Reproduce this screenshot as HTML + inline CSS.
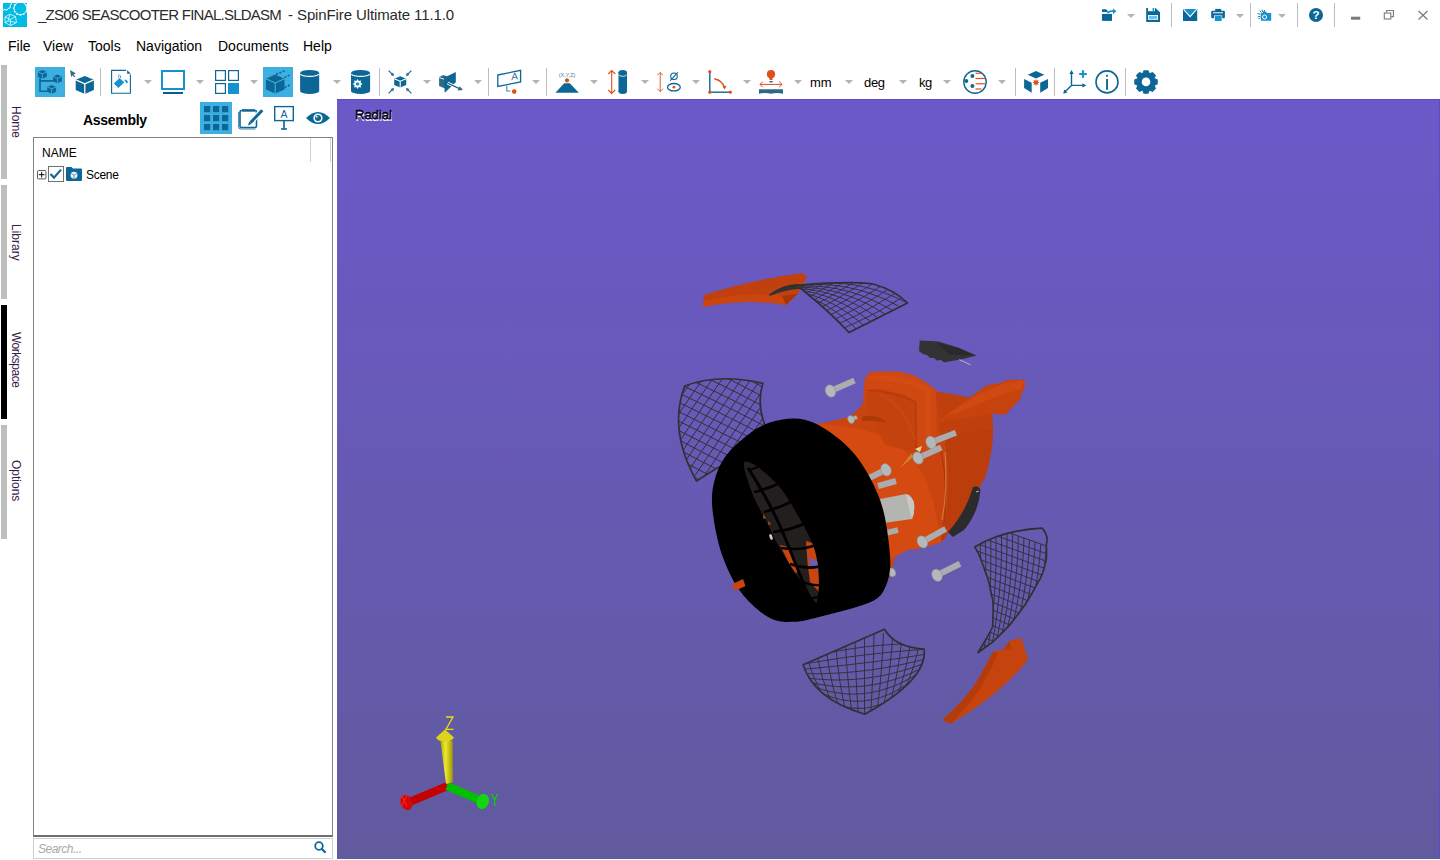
<!DOCTYPE html>
<html><head><meta charset="utf-8">
<style>
*{margin:0;padding:0;box-sizing:border-box}
html,body{width:1440px;height:860px;overflow:hidden;background:#fff;font-family:"Liberation Sans",sans-serif;color:#000}
.abs{position:absolute}
#title{left:38px;top:6px;font-size:15px;color:#2b2b2b;white-space:pre}
.menu{top:38px;font-size:14px;color:#000;white-space:nowrap}
.tab{left:1px;width:6px;height:114px;background:#bebebe}
.tabt{left:11px;width:12px;font-size:12px;color:#3a1a48;writing-mode:vertical-rl;white-space:nowrap}
#vp{left:337px;top:99px;width:1103px;height:760px;background:linear-gradient(#6c59c9,#615a9e);border-top:1px solid #5b4bcb;border-right:1px solid #5b4bcb}
svg{position:absolute;left:0;top:0}
</style></head><body>
<div class="abs" style="left:3px;top:3px;width:24px;height:24px;background:#00bce4"></div>
<div id="title" class="abs"><span style="letter-spacing:-0.76px">_ZS06 SEASCOOTER FINAL.SLDASM</span><span style="letter-spacing:-0.12px;margin-left:3px"> - SpinFire Ultimate 11.1.0</span></div>
<div class="abs menu" style="left:8px">File</div>
<div class="abs menu" style="left:43px">View</div>
<div class="abs menu" style="left:88px">Tools</div>
<div class="abs menu" style="left:136px">Navigation</div>
<div class="abs menu" style="left:218px">Documents</div>
<div class="abs menu" style="left:303px">Help</div>

<div class="abs tab" style="top:65px"></div>
<div class="abs tab" style="top:185px"></div>
<div class="abs tab" style="top:305px;background:#000"></div>
<div class="abs tab" style="top:425px"></div>
<div class="abs tabt" style="top:106px">Home</div>
<div class="abs tabt" style="top:224px">Library</div>
<div class="abs tabt" style="top:332px;letter-spacing:-0.5px">Workspace</div>
<div class="abs tabt" style="top:460px">Options</div>

<div class="abs" style="left:83px;top:112px;font-size:14px;font-weight:bold;letter-spacing:-0.3px">Assembly</div>
<div class="abs" style="left:33px;top:137px;width:300px;height:700px;border:1px solid #828282;border-bottom:2px solid #6e6e6e"></div>
<div class="abs" style="left:310px;top:138px;width:1px;height:24px;background:#d0d0d0"></div>
<div class="abs" style="left:330px;top:138px;width:1px;height:24px;background:#d0d0d0"></div>
<div class="abs" style="left:42px;top:146px;font-size:12px">NAME</div>
<div class="abs" style="left:86px;top:168px;font-size:12px;letter-spacing:-0.3px">Scene</div>
<div class="abs" style="left:33px;top:838px;width:300px;height:21px;border:1px solid #d0d0d0"></div>
<div class="abs" style="left:38px;top:842px;font-size:12px;font-style:italic;color:#a8a8a8;letter-spacing:-0.5px">Search...</div>

<div id="vp" class="abs"></div>
<div class="abs" style="left:355px;top:107px;font-size:13px;color:#000;text-shadow:0.5px 1.6px 0 #fff;-webkit-text-stroke:0.3px #000">Radial</div>

<div class="abs" style="left:810px;top:75px;font-size:13px">mm</div>
<div class="abs" style="left:864px;top:75px;font-size:13px;letter-spacing:-0.3px">deg</div>
<div class="abs" style="left:919px;top:75px;font-size:13px;letter-spacing:-0.5px">kg</div>

<svg width="1440" height="860" viewBox="0 0 1440 860">
<rect x="1102" y="13.9" width="10" height="7" fill="#0d6796"/>
<polygon points="1102,9.2 1106,9.2 1107.5,10.5 1107.5,12 1102,12" fill="#0d6796"/>
<path d="M1107.4,13 Q1109,10.8 1113.5,10.8" fill="none" stroke="#1592cf" stroke-width="1.8"/>
<polygon points="1113,8.6 1116.3,11.3 1113,14.2" fill="#1592cf"/>
<polygon points="1127,13.9 1135,13.9 1131,17.9" fill="#b4b4b4"/>
<polygon points="1146.2,8 1155.4,8 1160,12.3 1160,22 1146.2,22" fill="#0d6796"/>
<rect x="1148" y="8" width="7" height="3.2" fill="#fff"/>
<rect x="1152.6" y="8" width="1.6" height="3" fill="#1592cf"/>
<rect x="1148" y="15" width="10" height="4.8" fill="#fff"/>
<rect x="1148.8" y="15.8" width="8.4" height="3.2" fill="#6cc1e8"/>
<rect x="1171" y="3" width="1" height="24" fill="#bdbdbd"/>
<rect x="1183" y="9" width="14.2" height="12" fill="#0d6796"/>
<polygon points="1183,9 1197.2,9 1190.1,16.5" fill="#1592cf"/>
<polyline points="1183.6,9.4 1190.1,16.6 1196.6,9.4" fill="none" stroke="#fff" stroke-width="1.1"/>
<rect x="1215.2" y="8.9" width="6" height="3" fill="#0d6796"/>
<rect x="1211.2" y="10.7" width="13.7" height="7.6" rx="1" fill="#0d6796"/>
<rect x="1213" y="12.3" width="10" height="1" fill="#fff"/>
<rect x="1214" y="15.4" width="8.2" height="5.8" fill="#fff"/>
<rect x="1214.8" y="15.9" width="6.8" height="5.1" fill="#1592cf"/>
<polygon points="1236,13.9 1244,13.9 1240,17.9" fill="#b4b4b4"/>
<rect x="1250" y="3" width="1" height="24" fill="#bdbdbd"/>
<rect x="1261" y="13" width="10.2" height="7.8" rx="0.6" fill="#1592cf"/>
<rect x="1263" y="11.6" width="3.5" height="2" fill="#1592cf"/>
<circle cx="1264.6" cy="17" r="2" fill="none" stroke="#fff" stroke-width="1"/>
<line x1="1262" y1="9.6" x2="1262.6" y2="12.2" stroke="#0d6796" stroke-width="0.9"/>
<line x1="1259.5" y1="10.8" x2="1261.5" y2="12.6" stroke="#0d6796" stroke-width="0.9"/>
<line x1="1257.5" y1="13.6" x2="1260.6" y2="14.2" stroke="#0d6796" stroke-width="0.9"/>
<line x1="1257.8" y1="16.8" x2="1260.6" y2="16.2" stroke="#0d6796" stroke-width="0.9"/>
<line x1="1258.6" y1="18.8" x2="1260.6" y2="17.8" stroke="#0d6796" stroke-width="0.9"/>
<line x1="1264.5" y1="10" x2="1264" y2="12.2" stroke="#0d6796" stroke-width="0.9"/>
<polygon points="1278,13.9 1286,13.9 1282,17.9" fill="#b4b4b4"/>
<rect x="1297" y="3" width="1" height="24" fill="#bdbdbd"/>
<circle cx="1316" cy="15" r="7" fill="#0d6796"/>
<text x="1316" y="19.3" font-family="Liberation Sans" font-weight="bold" font-size="11.5" fill="#fff" text-anchor="middle">?</text>
<rect x="1334" y="3" width="1" height="24" fill="#bdbdbd"/>
<rect x="1351" y="16.7" width="9.2" height="3" fill="#7a7a7a"/>
<rect x="1384.3" y="13" width="6.5" height="6" fill="none" stroke="#7a7a7a" stroke-width="1.1"/>
<polyline points="1386.6,12.4 1386.6,10.5 1393.4,10.5 1393.4,16.6 1391.2,16.6" fill="none" stroke="#7a7a7a" stroke-width="1.1"/>
<path d="M1418.5,11 L1427.5,19.5 M1427.5,11 L1418.5,19.5" stroke="#7a7a7a" stroke-width="1.2"/>
<rect x="35" y="67" width="30" height="30" fill="#3eafe1"/>
<path d="M40,78 V91.2 H47.5 M40,80.9 H53.5" fill="none" stroke="#0d6796" stroke-width="1.6"/>
<polygon points="42.35,70.1 46.8,71.99 46.8,76.81 42.35,78.7 37.9,76.81 37.9,71.99" fill="#0d6796"/>
<polyline points="37.9,71.99 42.35,73.88 46.8,71.99" fill="none" stroke="#3eafe1" stroke-width="0.9"/>
<line x1="42.35" y1="73.88" x2="42.35" y2="78.7" stroke="#3eafe1" stroke-width="0.9"/>
<polygon points="57.45,74.6 61.9,76.49 61.9,81.31 57.45,83.2 53,81.31 53,76.49" fill="#0d6796"/>
<polyline points="53,76.49 57.45,78.38 61.9,76.49" fill="none" stroke="#3eafe1" stroke-width="0.9"/>
<line x1="57.45" y1="78.38" x2="57.45" y2="83.2" stroke="#3eafe1" stroke-width="0.9"/>
<polygon points="51.65,85 56.1,86.91 56.1,91.79 51.65,93.7 47.2,91.79 47.2,86.91" fill="#0d6796"/>
<polyline points="47.2,86.91 51.65,88.83 56.1,86.91" fill="none" stroke="#3eafe1" stroke-width="0.9"/>
<line x1="51.65" y1="88.83" x2="51.65" y2="93.7" stroke="#3eafe1" stroke-width="0.9"/>
<polygon points="70.1,70.1 75.9,73.6 73.4,74.4 75.3,76.6 74.4,77.3 72.6,75.2 71.2,77" fill="#2c6a86"/>
<polygon points="84.8,75.9 93.9,79.86 93.9,89.94 84.8,93.9 75.7,89.94 75.7,79.86" fill="#0d6796"/>
<polyline points="75.7,79.86 84.8,83.82 93.9,79.86" fill="none" stroke="#fff" stroke-width="1.3"/>
<line x1="84.8" y1="83.82" x2="84.8" y2="93.9" stroke="#fff" stroke-width="1.3"/>
<rect x="100" y="68" width="1" height="28" fill="#bdbdbd"/>
<path d="M126,70.4 H111.6 V93.2 H130.4 V74.6" fill="none" stroke="#0d6796" stroke-width="1.1"/>
<polygon points="127.1,70.1 130.8,73.8 127.1,73.8" fill="#0d6796"/>
<polygon points="113.9,83.5 119.5,77.9 124.3,82.3 118.4,87.9" fill="#1592cf"/>
<path d="M118.6,77.8 Q118.3,74.8 119.6,74.9 Q120.8,75 120.6,78" fill="none" stroke="#1592cf" stroke-width="0.8"/>
<path d="M124.6,79.4 Q127.8,79.6 127.9,82.6 L126.3,83.8 Q126.6,81.4 124.8,81.2 Z" fill="#1592cf"/>
<polygon points="144,80 152,80 148,84" fill="#b4b4b4"/>
<rect x="162" y="71" width="22" height="18" fill="none" stroke="#1592cf" stroke-width="2"/>
<rect x="163" y="92" width="20" height="2" fill="#0b5e8a"/>
<polygon points="196,80 204,80 200,84" fill="#b4b4b4"/>
<rect x="215.6" y="70.6" width="9.8" height="9.8" fill="none" stroke="#0d6796" stroke-width="1.2"/>
<rect x="228.6" y="70.6" width="9.8" height="9.8" fill="none" stroke="#0d6796" stroke-width="1.2"/>
<rect x="215.6" y="83.6" width="9.8" height="9.8" fill="none" stroke="#0d6796" stroke-width="1.2"/>
<rect x="228" y="83" width="11" height="11" fill="#1592cf"/>
<polygon points="250,80 258,80 254,84" fill="#b4b4b4"/>
<rect x="263" y="67" width="30" height="30" fill="#3eafe1"/>
<polygon points="275.2,74.6 284.5,78.78 284.5,89.42 275.2,93.6 265.9,89.42 265.9,78.78" fill="#0d6796"/>
<polyline points="265.9,78.78 275.2,82.96 284.5,78.78" fill="none" stroke="#3eafe1" stroke-width="1.1"/>
<line x1="275.2" y1="82.96" x2="275.2" y2="93.6" stroke="#3eafe1" stroke-width="1.1"/>
<path d="M276,74.4 L285.5,70.5 M284.3,77.6 L289.4,75.2 M284.5,87.6 L289.7,85" fill="none" stroke="#0d6796" stroke-width="1.5" stroke-dasharray="2.2,1.4"/>
<path d="M300.1,72.9 V91 A9.55,3 0 0 0 319.2,91 V72.9 Z" fill="#0d6796"/>
<ellipse cx="309.65" cy="72.9" rx="9.55" ry="3" fill="#0d6796"/>
<path d="M300.4,74.1 A9.55,3 0 0 0 318.9,74.1" fill="none" stroke="#fff" stroke-width="1.3"/>
<polygon points="333,80 341,80 337,84" fill="#b4b4b4"/>
<path d="M351,72.9 V91 A9.55,3 0 0 0 370.1,91 V72.9 Z" fill="#0d6796"/>
<ellipse cx="360.55" cy="72.9" rx="9.55" ry="3" fill="#0d6796"/>
<path d="M351.3,74.1 A9.55,3 0 0 0 369.8,74.1" fill="none" stroke="#fff" stroke-width="1.3"/>
<polygon points="362.6,84 360.56,85.22 361.14,87.54 358.82,86.96 357.6,89 356.38,86.96 354.06,87.54 354.64,85.22 352.6,84 354.64,82.78 354.06,80.46 356.38,81.04 357.6,79 358.82,81.04 361.14,80.46 360.56,82.78" fill="#fff"/>
<circle cx="357.6" cy="84" r="1.8" fill="#1592cf"/>
<rect x="379" y="68" width="1" height="28" fill="#bdbdbd"/>
<polygon points="400.2,76.2 406.2,78.71 406.2,85.09 400.2,87.6 394.2,85.09 394.2,78.71" fill="#0d6796"/>
<polyline points="394.2,78.71 400.2,81.22 406.2,78.71" fill="none" stroke="#fff" stroke-width="1.1"/>
<line x1="400.2" y1="81.22" x2="400.2" y2="87.6" stroke="#fff" stroke-width="1.1"/>
<line x1="388.6" y1="70.6" x2="393.4" y2="75.4" stroke="#2c6a86" stroke-width="1.3"/>
<polygon points="393.97,75.97 390.57,75.12 393.12,72.57" fill="#2c6a86"/>
<line x1="411.4" y1="70.6" x2="406.6" y2="75.4" stroke="#2c6a86" stroke-width="1.3"/>
<polygon points="406.03,75.97 406.88,72.57 409.43,75.12" fill="#2c6a86"/>
<line x1="388.6" y1="93.4" x2="393.4" y2="88.6" stroke="#2c6a86" stroke-width="1.3"/>
<polygon points="393.97,88.03 393.12,91.43 390.57,88.88" fill="#2c6a86"/>
<line x1="411.4" y1="93.4" x2="406.6" y2="88.6" stroke="#2c6a86" stroke-width="1.3"/>
<polygon points="406.03,88.03 409.43,88.88 406.88,91.43" fill="#2c6a86"/>
<polygon points="423,80 431,80 427,84" fill="#b4b4b4"/>
<polygon points="439.1,77 443.5,75 449,77.2 449,88.2 444.5,88.2 439.1,86" fill="#2c6a86"/>
<polyline points="439.4,77.6 444.5,79.4" stroke="#fff" stroke-width="0.9"/>
<polygon points="444.1,77.7 455.8,72.1 455.8,82.3 444.7,92.8" fill="#0d6796"/>
<line x1="447.6" y1="83.2" x2="460.6" y2="89" stroke="#fff" stroke-width="3"/>
<line x1="447.6" y1="83.2" x2="460" y2="88.8" stroke="#2c6a86" stroke-width="1.4"/>
<polygon points="463,90 457.6,90.6 459.6,86.2" fill="#2c6a86"/>
<polygon points="474,80 482,80 478,84" fill="#b4b4b4"/>
<rect x="488" y="68" width="1" height="28" fill="#bdbdbd"/>
<polygon points="497.8,75 520.6,70.4 520.6,82 497.8,86.4" fill="none" stroke="#0d6796" stroke-width="1.3"/>
<text x="511.2" y="80.6" font-family="Liberation Sans" font-size="10" fill="#2c6a86" transform="skewY(-8) translate(0,71.5)" >A</text>
<path d="M506.8,86 V91 H510.3" fill="none" stroke="#3a8ab0" stroke-width="1.1"/>
<circle cx="514.2" cy="91.6" r="2.3" fill="#e04e1b"/>
<polygon points="532,80 540,80 536,84" fill="#b4b4b4"/>
<rect x="546" y="68" width="1" height="28" fill="#bdbdbd"/>
<text x="567" y="76.8" font-family="Liberation Sans" font-size="5.5" fill="#4a7f99" text-anchor="middle">(X,Y,Z)</text>
<polygon points="555.4,92.8 564.2,83.2 569.8,83.2 578.8,92.8" fill="#0d6796"/>
<circle cx="567" cy="80.4" r="2.1" fill="#e04e1b"/>
<polygon points="590,80 598,80 594,84" fill="#b4b4b4"/>
<line x1="611.7" y1="70.5" x2="611.7" y2="93.5" stroke="#e04e1b" stroke-width="1.1"/>
<polyline points="608.2,74 611.7,70.5 615.2,74" fill="none" stroke="#e04e1b" stroke-width="1.1"/>
<polyline points="608.2,90 611.7,93.5 615.2,90" fill="none" stroke="#e04e1b" stroke-width="1.1"/>
<rect x="618.5" y="72" width="8.5" height="20" fill="#0d6796"/>
<ellipse cx="622.75" cy="72.6" rx="4.25" ry="2.6" fill="#0d6796"/>
<ellipse cx="622.75" cy="91.6" rx="4.25" ry="2.4" fill="#0d6796"/>
<path d="M618.7,74.5 A4.1,2.2 0 0 0 626.8,74.5" fill="none" stroke="#fff" stroke-width="0.8"/>
<polygon points="641,80 649,80 645,84" fill="#b4b4b4"/>
<line x1="660.2" y1="72.5" x2="660.2" y2="91.5" stroke="#e04e1b" stroke-width="0.9"/>
<polyline points="657.4,75.3 660.2,72.5 663,75.3" fill="none" stroke="#e04e1b" stroke-width="0.9"/>
<polyline points="657.4,88.7 660.2,91.5 663,88.7" fill="none" stroke="#e04e1b" stroke-width="0.9"/>
<circle cx="674" cy="76.3" r="3.3" fill="none" stroke="#0d6796" stroke-width="1.1"/>
<line x1="670.2" y1="80.6" x2="677.8" y2="72.4" stroke="#0d6796" stroke-width="1.1"/>
<ellipse cx="673.9" cy="87.2" rx="6.4" ry="3.7" fill="none" stroke="#0d6796" stroke-width="1.3"/>
<circle cx="673.9" cy="87.2" r="1.4" fill="#e04e1b"/>
<polygon points="692,80 700,80 696,84" fill="#b4b4b4"/>
<line x1="709.8" y1="71.8" x2="709.8" y2="92.3" stroke="#0d6796" stroke-width="1.4"/>
<line x1="709.8" y1="92.2" x2="730.5" y2="92.2" stroke="#0d6796" stroke-width="1.4"/>
<circle cx="709.8" cy="71.7" r="1.6" fill="#e04e1b"/>
<circle cx="709.8" cy="92.2" r="1.6" fill="#e04e1b"/>
<circle cx="730.3" cy="92.2" r="1.6" fill="#e04e1b"/>
<path d="M714.3,78.8 Q722.8,80.6 724.5,88" fill="none" stroke="#e04e1b" stroke-width="1.5"/>
<polygon points="722.4,85.8 726.4,86 724.6,89.4" fill="#e04e1b"/>
<polygon points="743,80 751,80 747,84" fill="#b4b4b4"/>
<circle cx="771" cy="74.2" r="4.1" fill="#e04e1b"/>
<rect x="769.5" y="77" width="3" height="3" fill="#e04e1b"/>
<rect x="769.3" y="81" width="3.4" height="1.4" fill="#2c6f8f"/>
<line x1="760" y1="84.4" x2="782" y2="84.4" stroke="#e04e1b" stroke-width="1"/>
<polyline points="762.8,81.6 760,84.4 762.8,87.2" fill="none" stroke="#e04e1b" stroke-width="1"/>
<polyline points="779.2,81.6 782,84.4 779.2,87.2" fill="none" stroke="#e04e1b" stroke-width="1"/>
<path d="M759,89.2 H783 V93.8 Q777,92.3 771,93.8 Q765,92.3 759,93.8 Z" fill="#2e6a86"/>
<polygon points="794,80 802,80 798,84" fill="#b4b4b4"/>
<polygon points="845,80 853,80 849,84" fill="#b4b4b4"/>
<polygon points="899,80 907,80 903,84" fill="#b4b4b4"/>
<polygon points="943,80 951,80 947,84" fill="#b4b4b4"/>
<circle cx="975" cy="82" r="11.2" fill="none" stroke="#0d6796" stroke-width="1.4"/>
<circle cx="972.4" cy="76" r="2" fill="#0d6796"/>
<circle cx="966.3" cy="81" r="2" fill="#0d6796"/>
<circle cx="972.4" cy="86.1" r="2" fill="#0d6796"/>
<line x1="975.5" y1="73.3" x2="981.5" y2="73.3" stroke="#e04e1b" stroke-width="1.2"/>
<line x1="975.5" y1="78.5" x2="985.2" y2="78.5" stroke="#e04e1b" stroke-width="1.2"/>
<line x1="975.5" y1="83.8" x2="985.2" y2="83.8" stroke="#e04e1b" stroke-width="1.2"/>
<line x1="975.5" y1="89" x2="981.5" y2="89" stroke="#e04e1b" stroke-width="1.2"/>
<polygon points="998,80 1006,80 1002,84" fill="#b4b4b4"/>
<rect x="1015" y="68" width="1" height="28" fill="#bdbdbd"/>
<polygon points="1036,70.9 1044.3,74.8 1036,78.6 1027.8,74.8" fill="#0d6796"/>
<polygon points="1024.1,79.1 1031.7,82.8 1031.7,92.7 1024.1,88.1" fill="#0d6796"/>
<polygon points="1048,79.1 1040.2,82.8 1040.2,92.7 1048,88.1" fill="#0d6796"/>
<polygon points="1039.6,82.5 1037.76,83.23 1038.55,85.05 1036.73,84.26 1036,86.1 1035.27,84.26 1033.45,85.05 1034.24,83.23 1032.4,82.5 1034.24,81.77 1033.45,79.95 1035.27,80.74 1036,78.9 1036.73,80.74 1038.55,79.95 1037.76,81.77" fill="#e04e1b"/>
<rect x="1054" y="68" width="1" height="28" fill="#bdbdbd"/>
<path d="M1071.5,72.5 V85.4 H1084 M1071.5,85.4 L1065,91.8" fill="none" stroke="#0d6796" stroke-width="1.4"/>
<polygon points="1071.5,70 1069.3,74 1073.7,74" fill="#0d6796"/>
<polygon points="1086.3,85.4 1082.4,83.2 1082.4,87.6" fill="#0d6796"/>
<polygon points="1063.2,93.8 1064.2,89.4 1067.4,92.6" fill="#0d6796"/>
<path d="M1083,70.2 V77.8 M1079.2,74 H1086.8" stroke="#1592cf" stroke-width="2.2"/>
<circle cx="1107" cy="81.9" r="11" fill="none" stroke="#0d6796" stroke-width="1.6"/>
<circle cx="1107" cy="75.8" r="1.1" fill="#0d6796"/>
<rect x="1106.1" y="79" width="1.9" height="10.8" fill="#0d6796"/>
<rect x="1125" y="68" width="1" height="28" fill="#bdbdbd"/>
<polygon points="1154.4,78.15 1157.76,79.52 1157.76,84.28 1154.4,85.65 1154.59,85.19 1156,88.53 1152.63,91.9 1149.29,90.49 1149.75,90.3 1148.38,93.66 1143.62,93.66 1142.25,90.3 1142.71,90.49 1139.37,91.9 1136,88.53 1137.41,85.19 1137.6,85.65 1134.24,84.28 1134.24,79.52 1137.6,78.15 1137.41,78.61 1136,75.27 1139.37,71.9 1142.71,73.31 1142.25,73.5 1143.62,70.14 1148.38,70.14 1149.75,73.5 1149.29,73.31 1152.63,71.9 1156,75.27 1154.59,78.61" fill="#0d6796"/>
<circle cx="1146" cy="81.9" r="4.3" fill="#fff"/>
<g>
<!-- assembly header icons -->
<rect x="200" y="102" width="32" height="32" fill="#3eafe1"/>
<g fill="#0d6796">
<rect x="204" y="106" width="6.2" height="6.2"/><rect x="213" y="106" width="6.2" height="6.2"/><rect x="222" y="106" width="6.2" height="6.2"/>
<rect x="204" y="115" width="6.2" height="6.2"/><rect x="213" y="115" width="6.2" height="6.2"/><rect x="222" y="115" width="6.2" height="6.2"/>
<rect x="204" y="124" width="6.2" height="6.2"/><rect x="213" y="124" width="6.2" height="6.2"/><rect x="222" y="124" width="6.2" height="6.2"/>
</g>
<path d="M241.5,110.5 H255 Q256.5,110.5 256.5,112 V126 Q256.5,127.5 255,127.5 H241.5 Q240,127.5 240,126 V112 Q240,110.5 241.5,110.5 Z" fill="none" stroke="#0d6796" stroke-width="1.6"/>
<path d="M238.6,112 V126.5 Q238.6,129 241,129 H255.5" fill="none" stroke="#0d6796" stroke-width="1.1" opacity="0.75"/>
<path d="M242,110.4 H255" stroke="#0d6796" stroke-width="2.4"/>
<path d="M262.3,110.2 L250.3,122.8" stroke="#fff" stroke-width="5.4"/>
<path d="M262.3,110.2 L250.6,122.5" stroke="#0d6796" stroke-width="3"/>
<polygon points="249.2,121.4 251.8,123.8 248,125.6" fill="#0d6796"/>
<rect x="274.7" y="106.6" width="18.6" height="14" fill="none" stroke="#0d6796" stroke-width="1.4"/>
<text x="284" y="117.6" font-family="Liberation Sans" font-size="10.5" fill="#0d6796" text-anchor="middle">A</text>
<rect x="283.2" y="121" width="1.6" height="8" fill="#0d6796"/>
<rect x="281" y="128.2" width="6" height="1.6" fill="#0d6796"/>
<path d="M306,118 Q318,106 330,118 Q318,130 306,118 Z" fill="#0d6796"/>
<circle cx="318" cy="118" r="4.6" fill="#fff"/>
<circle cx="318" cy="118" r="3" fill="#0d6796"/>
<circle cx="316.8" cy="116.8" r="0.9" fill="#fff"/>
<!-- tree row icons -->
<rect x="37.5" y="170.5" width="8.4" height="8.4" rx="1" fill="#fff" stroke="#555" stroke-width="1"/>
<path d="M38.9,174.7 H44.5 M41.7,171.9 V177.5" stroke="#000" stroke-width="1"/>
<rect x="48.5" y="166.5" width="15" height="15" fill="#fff" stroke="#707070" stroke-width="1"/>
<path d="M50.5,174 L54,177.6 L61,169.6" fill="none" stroke="#0d6796" stroke-width="2.2"/>
<path d="M66,168 Q66,167 67,167 H71.5 L73,168.5 H81 Q82,168.5 82,169.5 V180 Q82,181 81,181 H67 Q66,181 66,180 Z" fill="#0d6796"/>
<circle cx="74" cy="175.2" r="3.4" fill="#e6f0f5"/>
<path d="M74,175.2 V178.4 M74,175.2 L71.4,173.6 M74,175.2 L76.6,173.6" stroke="#0d6796" stroke-width="0.6"/>
<!-- search icon -->
<circle cx="319" cy="846" r="3.8" fill="none" stroke="#0d6796" stroke-width="1.8"/>
<line x1="321.6" y1="848.8" x2="325.5" y2="852.6" stroke="#0d6796" stroke-width="2.2"/>
<!-- app icon detail -->
<clipPath id="appc"><rect x="3" y="3" width="24" height="24"/></clipPath>
<g clip-path="url(#appc)">
<polygon points="28.0,8.3 26.6,10.0 27.0,12.1 24.9,12.8 24.2,14.9 22.1,14.5 20.4,15.9 18.7,14.5 16.6,14.9 15.9,12.8 13.8,12.1 14.2,10.0 12.8,8.3 14.2,6.6 13.8,4.5 15.9,3.8 16.6,1.7 18.7,2.1 20.4,0.7 22.1,2.1 24.2,1.7 24.9,3.8 27.0,4.5 26.6,6.6" fill="#fff"/>
<circle cx="20.4" cy="8.3" r="5.9" fill="#00bce4"/>
<polygon points="11.6,4.0 10.1,5.7 10.3,7.9 8.2,8.4 7.0,10.3 5.0,9.4 3.0,10.3 1.8,8.4 -0.3,7.9 -0.1,5.7 -1.6,4.0 -0.1,2.3 -0.3,0.1 1.8,-0.4 3.0,-2.3 5.0,-1.4 7.0,-2.3 8.2,-0.4 10.3,0.1 10.1,2.3" fill="none" stroke="#fff" stroke-width="1"/>
<path d="M5,17 L10,14.2 L15.5,16.5 L16.5,22.5 L10.5,25.5 L5,22.5 Z M5,17 L10.5,19.5 L15.5,16.5 M10.5,19.5 L10.5,25.5 M10,14.2 L8,21 L16.5,22.5 M5,22.5 L8,21" fill="none" stroke="#fff" stroke-width="0.8" opacity="0.9"/>
</g>
</g>
<defs><clipPath id="mc1"><path d="M770,295 Q785,284 800,285 Q850,281 873,284 Q895,290 907.5,303 L849,332.5 Q828,310 800,288 Q785,289 770,295 Z"/></clipPath><clipPath id="mc2"><path d="M684.7,386 Q719,373 762.9,383.3 Q756,405 766.4,428.7 L745,455 L717.5,467.8 L696.5,481 Q668,430 684.7,386 Z"/></clipPath><clipPath id="mc3"><path d="M974.7,546.9 Q1003,530 1042.2,528.1 Q1049,536 1046.3,544.4 Q1047,560 1045.5,562.3 Q1043,575 1038.2,581.9 Q1032,594 1025.1,604.7 Q1017,616 1008.9,625.9 Q1000,635 992.6,642.1 L977.9,652.7 Q993,628 992.6,625.9 Q994,600 991.8,596.5 Q989,580 986,573.7 Q980,555 974.7,546.9 Z"/></clipPath><clipPath id="mc4"><path d="M803.1,664.8 L884.5,629.3 Q895,647.4 924.1,649.1 Q928,679.4 864.8,714.2 Q814,699.3 803.1,664.8 Z"/></clipPath><clipPath id="gclip"><path d="M744,463 C742.8,466.7 748.2,481.8 751,490 C753.8,498.2 757.8,505.2 761,512 C764.2,518.8 767.2,525.5 770,531 C772.8,536.5 774.7,539.3 778,545 C781.3,550.7 785.8,558.5 790,565 C794.2,571.5 798.9,578 803,584 C807.1,590 812.1,598.2 814.4,601 C816.7,603.8 816.2,604.3 817,601 C817.8,597.7 819,588.7 818.9,581.2 C818.8,573.7 817.9,563.5 816.2,556 C814.6,548.5 812.3,543.2 809,536 C805.7,528.8 801.1,520.8 796.3,512.7 C791.5,504.6 786.3,495 780,487.5 C773.7,480 764.4,471.7 758.4,467.6 C752.4,463.5 745.2,459.3 744,463 Z"/></clipPath></defs>
<path d="M703,307 L704,295 Q750,280 803,273 L807,277 L800,290 L797,295 L786,305 Q745,298 703,307 Z" fill="#c0400e"/>
<path d="M704,301 Q745,291 786,296 L786,305 Q745,298 703,307 Z" fill="#d44a11" opacity="0.55"/>
<path d="M782,296 L797,294 L786,305 Z" fill="#a83508"/>
<g clip-path="url(#mc1)"><path d="M772.3,291.8 L782.8,288.7 L793.1,286.3 L803.4,284.5 L813.7,283.3 L823.9,282.8 L834.1,282.9 L844.3,283.6 L854.4,285 L864.4,287 L874.4,289.6 L884.4,292.9 L894.3,296.8 L904.2,301.3 L914.1,306.5 L923.8,312.3 L933.6,318.8 M770.9,291.2 L781,288.7 L790.9,286.7 L800.9,285.4 L810.8,284.7 L820.6,284.5 L830.4,285 L840.1,286.1 L849.8,287.8 L859.4,290.1 L869,293.1 L878.5,296.6 L888,300.7 L897.4,305.5 L906.8,310.8 L916.1,316.8 L925.4,323.3 M769.7,290.8 L779.4,288.7 L788.9,287.2 L798.5,286.3 L808,286 L817.4,286.3 L826.7,287.2 L836,288.6 L845.3,290.6 L854.4,293.2 L863.6,296.4 L872.6,300.2 L881.6,304.5 L890.6,309.4 L899.4,315 L908.3,321.1 L917,327.7 M768.7,290.4 L778,288.8 L787.1,287.8 L796.2,287.3 L805.3,287.4 L814.2,288 L823.1,289.2 L832,291 L840.7,293.3 L849.4,296.2 L858.1,299.6 L866.7,303.6 L875.2,308.2 L883.6,313.3 L892,319 L900.3,325.2 L908.5,332 M768,290 L776.8,288.9 L785.5,288.3 L794.1,288.3 L802.7,288.8 L811.2,289.8 L819.6,291.3 L828,293.4 L836.2,296 L844.5,299.1 L852.6,302.8 L860.6,307 L868.6,311.7 L876.5,317 L884.3,322.8 L892.1,329.1 L899.8,336 M767.4,289.8 L775.7,289.1 L784,289 L792.2,289.3 L800.3,290.2 L808.3,291.5 L816.2,293.4 L824,295.7 L831.8,298.6 L839.5,302 L847,305.9 L854.6,310.3 L862,315.2 L869.3,320.6 L876.6,326.5 L883.8,332.9 L890.9,339.8 M767.1,289.6 L774.9,289.4 L782.7,289.6 L790.4,290.4 L797.9,291.6 L805.4,293.2 L812.8,295.4 L820.1,298 L827.3,301.2 L834.5,304.8 L841.5,308.9 L848.4,313.4 L855.3,318.5 L862,324 L868.7,330 L875.3,336.5 L881.8,343.5 M767,289.5 L774.3,289.7 L781.6,290.3 L788.7,291.4 L795.7,293 L802.7,295 L809.5,297.4 L816.3,300.3 L822.9,303.7 L829.5,307.5 L835.9,311.8 L842.3,316.5 L848.5,321.7 L854.7,327.3 L860.7,333.4 L866.7,340 L872.5,347 M767.1,289.5 L773.9,290.1 L780.6,291.1 L787.2,292.5 L793.7,294.4 L800,296.7 L806.3,299.4 L812.4,302.5 L818.5,306.1 L824.4,310.1 L830.3,314.6 L836,319.5 L841.7,324.8 L847.2,330.5 L852.6,336.7 L857.9,343.3 L863.1,350.3 M805.3,283.6 L803.2,284.1 L801.3,284.6 L799.4,285.2 L797.6,285.8 L795.9,286.4 L794.2,287 L792.7,287.6 L791.2,288.2 L789.9,288.9 L788.6,289.6 L787.4,290.3 L786.3,291 L785.3,291.8 L784.4,292.5 L783.6,293.3 L782.8,294.1 M814.3,281.6 L812.1,282.4 L809.9,283.3 L807.7,284.1 L805.7,285 L803.7,285.8 L801.9,286.7 L800,287.6 L798.3,288.5 L796.7,289.4 L795.1,290.3 L793.6,291.2 L792.1,292.1 L790.8,293.1 L789.5,294 L788.3,295 L787.2,295.9 M823.3,280.1 L820.8,281.2 L818.4,282.3 L816.1,283.5 L813.8,284.6 L811.6,285.7 L809.4,286.8 L807.3,287.9 L805.3,289 L803.4,290.1 L801.5,291.3 L799.6,292.4 L797.9,293.5 L796.2,294.7 L794.5,295.8 L793,296.9 L791.5,298.1 M832.3,279.1 L829.6,280.5 L827,281.9 L824.4,283.2 L821.9,284.6 L819.4,285.9 L817,287.3 L814.6,288.6 L812.3,289.9 L810,291.3 L807.8,292.6 L805.7,293.9 L803.6,295.2 L801.5,296.6 L799.5,297.9 L797.6,299.2 L795.7,300.5 M841.3,278.6 L838.4,280.2 L835.5,281.8 L832.7,283.4 L829.9,285 L827.2,286.6 L824.5,288.1 L821.8,289.7 L819.2,291.2 L816.6,292.8 L814.1,294.3 L811.6,295.8 L809.2,297.3 L806.8,298.8 L804.4,300.2 L802.1,301.7 L799.8,303.1 M850.2,278.5 L847.1,280.3 L844,282.2 L840.9,284 L837.9,285.8 L834.9,287.6 L831.9,289.4 L829,291.1 L826.1,292.9 L823.2,294.6 L820.3,296.3 L817.5,297.9 L814.7,299.6 L811.9,301.2 L809.2,302.9 L806.5,304.4 L803.9,306 M859.1,278.8 L855.8,280.9 L852.4,283 L849.1,285 L845.8,287.1 L842.6,289.1 L839.3,291 L836.1,293 L832.9,294.9 L829.7,296.8 L826.5,298.6 L823.3,300.4 L820.2,302.2 L817.1,304 L814,305.8 L810.9,307.5 L807.8,309.2 M868,279.6 L864.5,282 L860.9,284.2 L857.3,286.5 L853.8,288.7 L850.2,290.9 L846.7,293 L843.1,295.1 L839.6,297.2 L836.1,299.3 L832.6,301.3 L829.1,303.2 L825.6,305.2 L822.1,307.1 L818.6,309 L815.2,310.8 L811.7,312.6 M876.9,280.9 L873.1,283.4 L869.3,285.9 L865.5,288.4 L861.7,290.8 L857.8,293.1 L854,295.4 L850.2,297.7 L846.3,299.9 L842.5,302.1 L838.6,304.3 L834.8,306.4 L830.9,308.4 L827.1,310.5 L823.2,312.4 L819.4,314.4 L815.5,316.3 M885.8,282.7 L881.7,285.4 L877.7,288 L873.6,290.7 L869.5,293.2 L865.4,295.7 L861.3,298.2 L857.1,300.6 L853,303 L848.8,305.3 L844.6,307.6 L840.4,309.8 L836.2,312 L832,314.1 L827.8,316.2 L823.5,318.2 L819.2,320.2 M894.6,284.9 L890.3,287.8 L886,290.6 L881.7,293.4 L877.3,296.1 L872.9,298.8 L868.5,301.4 L864.1,303.9 L859.6,306.4 L855.1,308.9 L850.6,311.3 L846,313.6 L841.4,315.9 L836.8,318.1 L832.2,320.2 L827.5,322.3 L822.9,324.4 M903.4,287.5 L898.9,290.6 L894.4,293.6 L889.7,296.5 L885.1,299.4 L880.4,302.2 L875.7,304.9 L871,307.6 L866.2,310.2 L861.3,312.8 L856.5,315.3 L851.5,317.7 L846.6,320 L841.6,322.3 L836.6,324.6 L831.5,326.7 L826.4,328.8 M912.2,290.6 L907.5,293.9 L902.7,297 L897.8,300.1 L892.9,303.1 L887.9,306 L882.9,308.9 L877.8,311.7 L872.7,314.4 L867.5,317 L862.3,319.6 L857,322.1 L851.7,324.5 L846.3,326.9 L840.9,329.2 L835.4,331.4 L829.9,333.5 M921,294.2 L916,297.6 L910.9,300.9 L905.8,304.1 L900.6,307.2 L895.3,310.2 L890,313.2 L884.6,316.1 L879.1,318.9 L873.6,321.6 L868,324.2 L862.4,326.8 L856.7,329.3 L850.9,331.7 L845.1,334 L839.2,336.3 L833.3,338.5" fill="none" stroke="#303034" stroke-width="0.95"/></g>
<path d="M770,295 Q785,284 800,285 Q850,281 873,284 Q895,290 907.5,303 L849,332.5 Q828,310 800,288 Q785,289 770,295 Z" fill="none" stroke="#303034" stroke-width="1.7" stroke-linejoin="round"/>
<g clip-path="url(#mc2)"><path d="M701.8,327 L710.3,330.9 L718.7,335 L727.1,339.1 L735.5,343.3 L743.8,347.6 L752.1,352.1 L760.3,356.6 L768.5,361.2 L776.6,366 L784.7,370.8 L792.8,375.8 L800.8,380.8 L808.7,386 L816.6,391.2 L824.4,396.6 L832.2,402 M696.3,334.4 L704.8,338.3 L713.4,342.3 L721.8,346.4 L730.3,350.6 L738.7,354.9 L747,359.2 L755.3,363.7 L763.6,368.2 L771.8,372.9 L780,377.6 L788.1,382.4 L796.2,387.4 L804.3,392.4 L812.3,397.5 L820.3,402.7 L828.2,407.9 M690.9,341.8 L699.5,345.6 L708.1,349.6 L716.6,353.7 L725.1,357.8 L733.6,362.1 L742,366.4 L750.4,370.8 L758.7,375.2 L767,379.8 L775.3,384.4 L783.5,389.1 L791.7,393.9 L799.8,398.8 L807.9,403.8 L816,408.9 L824,414 M685.6,349 L694.2,352.9 L702.8,356.9 L711.4,360.9 L720,365.1 L728.5,369.2 L737,373.5 L745.4,377.8 L753.8,382.3 L762.2,386.7 L770.5,391.3 L778.8,395.9 L787.1,400.6 L795.3,405.4 L803.5,410.2 L811.7,415.1 L819.8,420.1 M680.3,356.2 L689,360.1 L697.7,364.1 L706.3,368.2 L714.9,372.3 L723.4,376.4 L732,380.6 L740.5,384.9 L748.9,389.3 L757.3,393.7 L765.7,398.2 L774.1,402.7 L782.5,407.3 L790.8,412 L799,416.7 L807.3,421.5 L815.5,426.4 M675.2,363.4 L683.9,367.3 L692.6,371.3 L701.2,375.3 L709.8,379.4 L718.4,383.6 L727,387.8 L735.5,392 L744,396.3 L752.5,400.7 L761,405.1 L769.4,409.6 L777.8,414.1 L786.2,418.7 L794.5,423.3 L802.8,428 L811.1,432.8 M670.1,370.4 L678.8,374.4 L687.5,378.4 L696.2,382.5 L704.8,386.6 L713.4,390.7 L722,394.9 L730.6,399.1 L739.1,403.4 L747.7,407.7 L756.2,412.1 L764.6,416.5 L773.1,421 L781.5,425.5 L789.9,430 L798.3,434.6 L806.6,439.2 M665.2,377.4 L673.9,381.5 L682.6,385.5 L691.2,389.6 L699.9,393.7 L708.5,397.9 L717.1,402 L725.7,406.3 L734.3,410.5 L742.8,414.8 L751.3,419.1 L759.8,423.5 L768.3,427.9 L776.8,432.3 L785.2,436.8 L793.7,441.3 L802.1,445.8 M660.3,384.4 L669,388.4 L677.7,392.5 L686.3,396.7 L695,400.8 L703.6,405 L712.2,409.2 L720.8,413.4 L729.4,417.6 L737.9,421.9 L746.5,426.2 L755,430.5 L763.5,434.8 L772,439.2 L780.5,443.6 L789,448 L797.5,452.5 M655.5,391.2 L664.2,395.4 L672.8,399.5 L681.5,403.7 L690.1,407.9 L698.7,412.1 L707.3,416.3 L715.9,420.5 L724.5,424.8 L733.1,429 L741.6,433.3 L750.2,437.6 L758.7,441.9 L767.2,446.2 L775.8,450.5 L784.3,454.9 L792.8,459.2 M650.8,398 L659.4,402.3 L668,406.5 L676.7,410.7 L685.3,414.9 L693.9,419.2 L702.5,423.4 L711,427.6 L719.6,431.9 L728.2,436.2 L736.8,440.4 L745.3,444.7 L753.9,449 L762.4,453.3 L770.9,457.5 L779.4,461.8 L788,466.1 M646.2,404.8 L654.8,409.1 L663.3,413.4 L671.9,417.7 L680.5,422 L689.1,426.2 L697.6,430.5 L706.2,434.8 L714.8,439.1 L723.3,443.3 L731.9,447.6 L740.4,451.9 L749,456.1 L757.5,460.4 L766,464.6 L774.6,468.9 L783.1,473.1 M641.6,411.4 L650.2,415.8 L658.7,420.2 L667.2,424.6 L675.8,429 L684.3,433.3 L692.8,437.6 L701.4,441.9 L709.9,446.2 L718.4,450.5 L727,454.8 L735.5,459.1 L744,463.3 L752.5,467.6 L761.1,471.8 L769.6,476 L778.1,480.2 M637.2,418 L645.7,422.5 L654.1,427 L662.6,431.5 L671.1,435.9 L679.6,440.3 L688,444.7 L696.5,449.1 L705,453.5 L713.5,457.8 L722,462.1 L730.5,466.4 L739,470.6 L747.5,474.9 L756.1,479.1 L764.6,483.3 L773.1,487.4 M632.8,424.6 L641.2,429.2 L649.6,433.8 L658,438.3 L666.4,442.9 L674.9,447.4 L683.3,451.8 L691.7,456.3 L700.2,460.7 L708.6,465 L717.1,469.4 L725.5,473.7 L734,478 L742.5,482.2 L751,486.4 L759.5,490.6 L768,494.7 M628.6,431 L636.9,435.8 L645.2,440.5 L653.5,445.2 L661.8,449.8 L670.2,454.4 L678.5,458.9 L686.9,463.5 L695.3,467.9 L703.7,472.3 L712.1,476.7 L720.5,481.1 L729,485.4 L737.4,489.6 L745.9,493.8 L754.3,498 L762.8,502.1 M624.4,437.4 L632.6,442.3 L640.8,447.2 L649,452 L657.3,456.7 L665.6,461.4 L673.8,466 L682.1,470.6 L690.5,475.2 L698.8,479.7 L707.1,484.1 L715.5,488.5 L723.9,492.8 L732.3,497.1 L740.7,501.3 L749.1,505.5 L757.5,509.7 M620.3,443.7 L628.4,448.8 L636.5,453.8 L644.6,458.7 L652.8,463.6 L661,468.4 L669.1,473.1 L677.4,477.8 L685.6,482.5 L693.9,487 L702.1,491.5 L710.4,496 L718.7,500.4 L727.1,504.7 L735.4,508.9 L743.8,513.1 L752.2,517.3 M616.2,450 L624.2,455.2 L632.2,460.4 L640.3,465.4 L648.3,470.4 L656.4,475.4 L664.5,480.2 L672.6,485 L680.8,489.8 L688.9,494.4 L697.1,499 L705.3,503.5 L713.6,507.9 L721.8,512.3 L730.1,516.6 L738.4,520.8 L746.8,525 M701.8,327 L695.6,335.3 L689.5,343.6 L683.6,351.7 L677.8,359.8 L672,367.8 L666.4,375.7 L660.9,383.5 L655.5,391.2 L650.2,398.9 L645,406.5 L640,413.9 L635,421.3 L630.1,428.6 L625.4,435.8 L620.8,443 L616.2,450 M708.9,330.3 L702.8,338.6 L696.8,346.9 L690.9,355 L685.1,363.1 L679.4,371.1 L673.7,379.1 L668.2,386.9 L662.8,394.7 L657.5,402.4 L652.3,410.1 L647.1,417.7 L642.1,425.2 L637.2,432.6 L632.3,439.9 L627.6,447.2 L623,454.4 M716.1,333.7 L710,342 L704,350.2 L698.2,358.3 L692.4,366.4 L686.7,374.5 L681.1,382.5 L675.5,390.4 L670.1,398.2 L664.7,406 L659.5,413.7 L654.3,421.4 L649.2,429 L644.2,436.5 L639.3,444 L634.4,451.4 L629.7,458.7 M723.2,337.1 L717.2,345.4 L711.3,353.6 L705.4,361.7 L699.7,369.8 L694,377.9 L688.4,385.9 L682.8,393.8 L677.4,401.7 L672,409.6 L666.7,417.4 L661.5,425.1 L656.3,432.8 L651.2,440.4 L646.2,448 L641.3,455.6 L636.5,463 M730.2,340.6 L724.3,348.8 L718.4,357 L712.6,365.2 L706.9,373.3 L701.2,381.3 L695.6,389.3 L690.1,397.3 L684.6,405.2 L679.2,413.1 L673.9,421 L668.6,428.8 L663.4,436.6 L658.3,444.3 L653.2,452 L648.2,459.7 L643.2,467.3 M737.3,344.2 L731.4,352.4 L725.6,360.5 L719.8,368.6 L714.2,376.7 L708.5,384.8 L702.9,392.8 L697.4,400.8 L691.9,408.8 L686.5,416.7 L681.1,424.6 L675.8,432.5 L670.5,440.3 L665.3,448.2 L660.2,456 L655.1,463.7 L650,471.5 M744.3,347.9 L738.5,356 L732.7,364.1 L727,372.2 L721.4,380.2 L715.8,388.3 L710.2,396.3 L704.7,404.3 L699.2,412.3 L693.7,420.3 L688.3,428.2 L683,436.2 L677.6,444.1 L672.4,452 L667.1,459.9 L662,467.8 L656.8,475.6 M751.2,351.6 L745.5,359.7 L739.8,367.7 L734.2,375.7 L728.6,383.8 L723,391.8 L717.4,399.8 L711.9,407.8 L706.4,415.8 L701,423.8 L695.5,431.8 L690.1,439.8 L684.8,447.8 L679.4,455.8 L674.1,463.8 L668.9,471.8 L663.6,479.7 M758.2,355.4 L752.5,363.4 L746.9,371.4 L741.3,379.4 L735.7,387.4 L730.2,395.4 L724.7,403.4 L719.1,411.4 L713.7,419.4 L708.2,427.4 L702.7,435.5 L697.3,443.5 L691.9,451.5 L686.5,459.6 L681.1,467.6 L675.8,475.7 L670.5,483.8 M765.1,359.3 L759.5,367.2 L754,375.1 L748.4,383 L742.9,391 L737.4,399 L731.9,406.9 L726.4,414.9 L720.9,423 L715.4,431 L709.9,439.1 L704.5,447.1 L699,455.2 L693.6,463.3 L688.2,471.5 L682.7,479.6 L677.3,487.8 M771.9,363.2 L766.5,371 L761,378.9 L755.5,386.8 L750,394.7 L744.6,402.6 L739.1,410.5 L733.6,418.5 L728.1,426.5 L722.6,434.6 L717.1,442.7 L711.7,450.8 L706.2,458.9 L700.7,467.1 L695.2,475.2 L689.7,483.5 L684.2,491.7 M778.8,367.3 L773.4,375 L768,382.7 L762.6,390.5 L757.1,398.4 L751.7,406.2 L746.3,414.2 L740.8,422.1 L735.3,430.1 L729.8,438.2 L724.3,446.3 L718.8,454.4 L713.3,462.5 L707.8,470.8 L702.2,479 L696.6,487.3 L691.1,495.6 M785.6,371.3 L780.3,379 L775,386.6 L769.6,394.3 L764.2,402.1 L758.8,409.9 L753.4,417.8 L748,425.8 L742.5,433.7 L737,441.8 L731.5,449.9 L726,458 L720.4,466.2 L714.9,474.4 L709.3,482.7 L703.6,491.1 L698,499.5 M792.3,375.5 L787.1,383 L781.9,390.6 L776.6,398.2 L771.3,405.9 L766,413.7 L760.6,421.5 L755.2,429.4 L749.7,437.3 L744.2,445.4 L738.7,453.4 L733.2,461.6 L727.6,469.8 L722,478.1 L716.3,486.4 L710.6,494.8 L704.9,503.3 M799.1,379.7 L794,387.1 L788.8,394.6 L783.6,402.1 L778.4,409.8 L773.1,417.4 L767.7,425.2 L762.4,433.1 L756.9,441 L751.4,449 L745.9,457 L740.4,465.2 L734.7,473.4 L729.1,481.7 L723.4,490 L717.6,498.5 L711.8,507 M805.8,384 L800.8,391.3 L795.7,398.7 L790.6,406.1 L785.4,413.6 L780.2,421.2 L774.9,428.9 L769.5,436.7 L764.1,444.6 L758.6,452.6 L753.1,460.6 L747.5,468.7 L741.9,477 L736.2,485.3 L730.5,493.7 L724.6,502.1 L718.8,510.7 M812.4,388.4 L807.5,395.6 L802.6,402.8 L797.5,410.1 L792.4,417.6 L787.2,425.1 L782,432.7 L776.7,440.4 L771.3,448.2 L765.8,456.2 L760.3,464.2 L754.7,472.3 L749.1,480.5 L743.3,488.8 L737.5,497.2 L731.7,505.7 L725.7,514.4 M819.1,392.9 L814.3,399.9 L809.4,407 L804.4,414.2 L799.4,421.5 L794.3,428.9 L789.1,436.5 L783.8,444.1 L778.4,451.9 L773,459.8 L767.5,467.8 L761.9,475.8 L756.2,484.1 L750.5,492.4 L744.6,500.8 L738.7,509.3 L732.7,518 M825.7,397.4 L821,404.3 L816.2,411.2 L811.3,418.3 L806.4,425.5 L801.3,432.8 L796.2,440.3 L790.9,447.9 L785.6,455.6 L780.2,463.4 L774.7,471.3 L769.1,479.4 L763.4,487.6 L757.6,495.9 L751.7,504.3 L745.8,512.8 L739.7,521.5 M832.2,402 L827.7,408.7 L823,415.5 L818.2,422.5 L813.3,429.6 L808.3,436.8 L803.2,444.1 L798,451.6 L792.8,459.2 L787.4,467 L781.9,474.9 L776.3,482.9 L770.6,491.1 L764.8,499.3 L758.9,507.8 L752.9,516.3 L746.8,525" fill="none" stroke="#303034" stroke-width="1.0"/></g>
<path d="M684.7,386 Q719,373 762.9,383.3 Q756,405 766.4,428.7 L745,455 L717.5,467.8 L696.5,481 Q668,430 684.7,386 Z" fill="none" stroke="#303034" stroke-width="1.7" stroke-linejoin="round"/>
<path d="M790,419 L819,424 L850.7,416.5 L863,404 L864,385 Q868,373 876,372.6 Q900,371 926,382 L935.5,391.4 L969.8,397.4 L991.9,413.7 Q996,440 985.7,476 Q975,495 970,507.6 L951,529.5 L941.8,542 L919.8,548.4 L907,550 L895,556 L891,576 L884,582 L800,582 Z" fill="#c9440f"/>
<path d="M819,424 Q860,425 890,440 Q925,460 935,510 L941.8,542 L919.8,548.4 L907,550 L888,561 L860,560 L830,470 Z" fill="#d44a11"/>
<path d="M945,440 Q968,428 992,419.6 Q996,440 985.7,476 Q975,495 970,507.6 L951,529.5 L941.8,542 Q952,490 945,440 Z" fill="#b53a0b" opacity="0.7"/>
<path d="M935.5,391.4 L969.8,397.4 L991.9,413.7 L993,430 Q965,432 940,436 Z" fill="#bf400d"/>
<path d="M936,423 L969.8,397.4 L986,385.8 L1004.7,381.7 L1006.4,380 L1023.3,379.4 L1025.6,383.5 L1019.8,399.8 L1004.7,414.9 L991.9,413.7 Q965,418 936,423 Z" fill="#c6430e"/>
<path d="M945,416 L975,396 L1004.7,383 L1023.5,380.5 L1022,389 Q995,396 960,412 Z" fill="#d24b12" opacity="0.8"/>
<path d="M864.6,405 L864.6,381 Q866,371.5 875,371.5 L897,371.5 Q915,374 923,381 L935.8,389.3 L935.8,452 L917,452 L917,404 Q912,397 902.3,394.5 L881.4,389.3 Q868,388 866,395 L866,405 Z" fill="#cf4812"/>
<path d="M866,395 Q868,388 881.4,389.3 L902.3,394.5 Q912,397 917,404 L917,452 L885,445 L866,405 Z" fill="#c3420e"/>
<path d="M867,390.5 Q890,390 915.5,402 L916.5,452" fill="none" stroke="#a93708" stroke-width="1.3" opacity="0.6"/>
<path d="M869,378 Q900,375 928,390 L928,450" fill="none" stroke="#da5318" stroke-width="5" opacity="0.45"/>
<path d="M880,395 Q905,405 915,440" fill="none" stroke="#cf4a14" stroke-width="3" opacity="0.6"/>
<path d="M862,417 Q876,413 887,423 Q875,420 862,421 Z" fill="#a83608" opacity="0.8"/>
<path d="M940,445 Q950,490 942,540" fill="none" stroke="#a8360a" stroke-width="1"/>
<path d="M945,452 Q948,490 942,520" fill="none" stroke="#d8b060" stroke-width="0.7" opacity="0.8"/>
<path d="M973,487 Q979,485 980.5,490 Q979,512 964,530 L953,537 L948,532 Q966,512 973,487 Z" fill="#2b2b2e"/>
<line x1="976" y1="492" x2="979" y2="491" stroke="#ddd" stroke-width="0.8"/>
<path d="M919.8,340.5 L938.4,341.6 L958,347.4 L976.7,355.6 L965,358.5 L944.2,362.5 L941,360 L937,360.5 L934,358 L930,358 L927,355 L923,354 L919,351 Z" fill="#333335"/>
<path d="M937,343 L958,348 L974,355 L950,355 Z" fill="#2a2a2c"/>
<line x1="959.3" y1="359.7" x2="970.9" y2="364.9" stroke="#c8c8b0" stroke-width="0.8"/>
<line x1="830.5" y1="391" x2="854.5" y2="380.5" stroke="#a9adb0" stroke-width="6" stroke-linecap="butt"/>
<ellipse cx="830.5" cy="391" rx="5" ry="6.4" fill="#b4b8bb" stroke="#8a8e92" stroke-width="0.5" transform="rotate(-23.6 830.5 391)"/>
<line x1="851" y1="419.5" x2="857" y2="417" stroke="#a9adb0" stroke-width="4" stroke-linecap="butt"/>
<ellipse cx="851" cy="419.5" rx="3.1" ry="4" fill="#b4b8bb" stroke="#8a8e92" stroke-width="0.5" transform="rotate(-22.6 851 419.5)"/>
<line x1="931" y1="442.4" x2="955.9" y2="432.8" stroke="#a9adb0" stroke-width="6" stroke-linecap="butt"/>
<ellipse cx="931" cy="442.4" rx="5" ry="6.4" fill="#b4b8bb" stroke="#8a8e92" stroke-width="0.5" transform="rotate(-21.1 931 442.4)"/>
<line x1="918" y1="458" x2="941.3" y2="447.4" stroke="#a9adb0" stroke-width="6" stroke-linecap="butt"/>
<ellipse cx="918" cy="458" rx="5" ry="6.4" fill="#b4b8bb" stroke="#8a8e92" stroke-width="0.5" transform="rotate(-24.5 918 458)"/>
<line x1="886" y1="469.8" x2="869" y2="478" stroke="#a9adb0" stroke-width="6" stroke-linecap="butt"/>
<ellipse cx="886" cy="469.8" rx="5" ry="6.4" fill="#b4b8bb" stroke="#8a8e92" stroke-width="0.5" transform="rotate(154.2 886 469.8)"/>
<line x1="878" y1="486" x2="896" y2="481" stroke="#a9adb0" stroke-width="6" stroke-linecap="butt"/>
<path d="M880,499 L906,494 Q912,496 914,503 Q915,512 912,519 L884,523 Z" fill="#b4b4b0"/>
<path d="M906,494 Q912,496 914,503 Q915,512 912,519 Q908,507 906,494 Z" fill="#c8c8c4"/>
<line x1="886" y1="533" x2="898" y2="530" stroke="#a9adb0" stroke-width="5.5" stroke-linecap="butt"/>
<line x1="922.4" y1="541.9" x2="945.7" y2="528.8" stroke="#a9adb0" stroke-width="6" stroke-linecap="butt"/>
<ellipse cx="922.4" cy="541.9" rx="5" ry="6.4" fill="#b4b8bb" stroke="#8a8e92" stroke-width="0.5" transform="rotate(-29.3 922.4 541.9)"/>
<line x1="937" y1="575.3" x2="960" y2="563.7" stroke="#a9adb0" stroke-width="6" stroke-linecap="butt"/>
<ellipse cx="937" cy="575.3" rx="5" ry="6.4" fill="#b4b8bb" stroke="#8a8e92" stroke-width="0.5" transform="rotate(-26.8 937 575.3)"/>
<line x1="892" y1="572.4" x2="893" y2="572" stroke="#a9adb0" stroke-width="2" stroke-linecap="butt"/>
<ellipse cx="892" cy="572.4" rx="3.5" ry="4.5" fill="#b4b8bb" stroke="#8a8e92" stroke-width="0.5" transform="rotate(-21.8 892 572.4)"/>
<polygon points="900,468 912,453 913,457" fill="#c89838" opacity="0.8"/>
<polygon points="915,449 922,446 920,452" fill="#d8d8a0"/>
<g clip-path="url(#mc3)"><path d="M962,516 L967.6,518 L973.2,520 L978.9,522 L984.5,524 L990.1,526 L995.8,528 L1001.4,530 L1007,532 L1012.6,534 L1018.2,536 L1023.9,538 L1029.5,540 L1035.1,542 L1040.8,544 L1046.4,546 L1052,548 M962.8,523.6 L968.3,525.6 L973.8,527.6 L979.4,529.6 L984.9,531.5 L990.4,533.5 L996,535.5 L1001.5,537.5 L1007,539.5 L1012.6,541.5 L1018.1,543.5 L1023.6,545.5 L1029.2,547.4 L1034.7,549.4 L1040.2,551.4 L1045.8,553.4 L1051.3,555.4 M963.5,531.2 L968.9,533.2 L974.4,535.1 L979.8,537.1 L985.2,539.1 L990.7,541.1 L996.1,543 L1001.5,545 L1007,547 L1012.4,548.9 L1017.9,550.9 L1023.3,552.9 L1028.7,554.9 L1034.2,556.8 L1039.6,558.8 L1045,560.8 L1050.5,562.7 M964.2,538.8 L969.5,540.8 L974.8,542.7 L980.2,544.7 L985.5,546.6 L990.8,548.6 L996.1,550.5 L1001.5,552.5 L1006.8,554.4 L1012.1,556.4 L1017.5,558.3 L1022.8,560.3 L1028.1,562.2 L1033.4,564.2 L1038.8,566.2 L1044.1,568.1 L1049.4,570.1 M964.8,546.4 L970,548.3 L975.2,550.3 L980.4,552.2 L985.7,554.1 L990.9,556.1 L996.1,558 L1001.3,559.9 L1006.5,561.9 L1011.7,563.8 L1017,565.8 L1022.2,567.7 L1027.4,569.6 L1032.6,571.6 L1037.8,573.5 L1043,575.4 L1048.2,577.4 M965.4,554 L970.5,555.9 L975.6,557.8 L980.7,559.7 L985.8,561.7 L990.8,563.6 L995.9,565.5 L1001,567.4 L1006.1,569.3 L1011.2,571.2 L1016.3,573.1 L1021.4,575.1 L1026.5,577 L1031.6,578.9 L1036.7,580.8 L1041.8,582.7 L1046.9,584.6 M965.9,561.6 L970.9,563.5 L975.8,565.4 L980.8,567.3 L985.8,569.2 L990.7,571.1 L995.7,572.9 L1000.7,574.8 L1005.6,576.7 L1010.6,578.6 L1015.5,580.5 L1020.5,582.4 L1025.5,584.3 L1030.4,586.2 L1035.4,588.1 L1040.4,590 L1045.3,591.9 M966.4,569.2 L971.2,571.1 L976,572.9 L980.9,574.8 L985.7,576.7 L990.5,578.5 L995.3,580.4 L1000.2,582.3 L1005,584.1 L1009.8,586 L1014.7,587.9 L1019.5,589.7 L1024.3,591.6 L1029.1,593.5 L1034,595.3 L1038.8,597.2 L1043.6,599.1 M966.8,576.8 L971.5,578.6 L976.2,580.5 L980.9,582.3 L985.5,584.2 L990.2,586 L994.9,587.8 L999.6,589.7 L1004.3,591.5 L1009,593.4 L1013.6,595.2 L1018.3,597 L1023,598.9 L1027.7,600.7 L1032.4,602.6 L1037.1,604.4 L1041.8,606.2 M967.2,584.4 L971.7,586.2 L976.2,588 L980.8,589.8 L985.3,591.6 L989.8,593.5 L994.4,595.3 L998.9,597.1 L1003.4,598.9 L1008,600.7 L1012.5,602.5 L1017,604.3 L1021.6,606.1 L1026.1,608 L1030.6,609.8 L1035.2,611.6 L1039.7,613.4 M967.5,592 L971.9,593.8 L976.2,595.6 L980.6,597.3 L985,599.1 L989.4,600.9 L993.8,602.7 L998.1,604.5 L1002.5,606.2 L1006.9,608 L1011.2,609.8 L1015.6,611.6 L1020,613.4 L1024.4,615.2 L1028.8,616.9 L1033.1,618.7 L1037.5,620.5 M967.8,599.6 L972,601.3 L976.2,603.1 L980.4,604.8 L984.6,606.6 L988.8,608.3 L993,610.1 L997.2,611.8 L1001.4,613.6 L1005.7,615.3 L1009.9,617.1 L1014.1,618.8 L1018.3,620.6 L1022.5,622.3 L1026.7,624.1 L1030.9,625.8 L1035.1,627.6 M968,607.2 L972,608.9 L976.1,610.6 L980.1,612.3 L984.1,614.1 L988.2,615.8 L992.2,617.5 L996.2,619.2 L1000.3,620.9 L1004.3,622.6 L1008.3,624.4 L1012.4,626.1 L1016.4,627.8 L1020.5,629.5 L1024.5,631.2 L1028.5,632.9 L1032.6,634.6 M968.2,614.8 L972,616.5 L975.9,618.2 L979.7,619.8 L983.6,621.5 L987.4,623.2 L991.3,624.9 L995.2,626.6 L999,628.2 L1002.9,629.9 L1006.7,631.6 L1010.6,633.3 L1014.4,634.9 L1018.3,636.6 L1022.1,638.3 L1026,640 L1029.8,641.7 M968.3,622.4 L972,624 L975.6,625.7 L979.3,627.3 L983,629 L986.6,630.6 L990.3,632.2 L994,633.9 L997.6,635.5 L1001.3,637.2 L1005,638.8 L1008.6,640.5 L1012.3,642.1 L1015.9,643.7 L1019.6,645.4 L1023.3,647 L1026.9,648.7 M968.4,630 L971.8,631.6 L975.3,633.2 L978.8,634.8 L982.2,636.4 L985.7,638 L989.2,639.6 L992.7,641.2 L996.1,642.8 L999.6,644.4 L1003.1,646 L1006.5,647.6 L1010,649.2 L1013.5,650.8 L1016.9,652.4 L1020.4,654 L1023.9,655.6 M968.4,637.6 L971.7,639.2 L974.9,640.7 L978.2,642.3 L981.5,643.8 L984.7,645.4 L988,647 L991.3,648.5 L994.5,650.1 L997.8,651.6 L1001.1,653.2 L1004.3,654.8 L1007.6,656.3 L1010.8,657.9 L1014.1,659.4 L1017.4,661 L1020.6,662.6 M968.4,645.2 L971.4,646.7 L974.5,648.2 L977.5,649.7 L980.6,651.3 L983.6,652.8 L986.7,654.3 L989.8,655.8 L992.8,657.3 L995.9,658.8 L998.9,660.4 L1002,661.9 L1005,663.4 L1008.1,664.9 L1011.1,666.4 L1014.2,667.9 L1017.2,669.5 M968.3,652.8 L971.1,654.3 L974,655.7 L976.8,657.2 L979.6,658.7 L982.5,660.2 L985.3,661.6 L988.1,663.1 L991,664.6 L993.8,666 L996.6,667.5 L999.5,669 L1002.3,670.5 L1005.2,671.9 L1008,673.4 L1010.8,674.9 L1013.7,676.3 M968.2,660.4 L970.8,661.8 L973.4,663.2 L976,664.7 L978.6,666.1 L981.2,667.5 L983.8,668.9 L986.4,670.4 L989,671.8 L991.7,673.2 L994.3,674.6 L996.9,676.1 L999.5,677.5 L1002.1,678.9 L1004.7,680.3 L1007.3,681.8 L1009.9,683.2 M968,668 L970.4,669.4 L972.8,670.8 L975.1,672.1 L977.5,673.5 L979.9,674.9 L982.2,676.2 L984.6,677.6 L987,679 L989.4,680.4 L991.8,681.8 L994.1,683.1 L996.5,684.5 L998.9,685.9 L1001.2,687.2 L1003.6,688.6 L1006,690 M962,516 L963,525.5 L963.8,535 L964.6,544.5 L965.4,554 L966,563.5 L966.6,573 L967.1,582.5 L967.5,592 L967.8,601.5 L968.1,611 L968.3,620.5 L968.4,630 L968.4,639.5 L968.3,649 L968.2,658.5 L968,668 M967.6,518 L968.5,527.5 L969.2,537 L969.9,546.4 L970.5,555.9 L971,565.4 L971.4,574.9 L971.7,584.3 L971.9,593.8 L972,603.2 L972,612.7 L972,622.2 L971.8,631.6 L971.6,641 L971.3,650.5 L970.9,659.9 L970.4,669.4 M973.2,520 L974,529.5 L974.6,538.9 L975.1,548.4 L975.6,557.8 L975.9,567.3 L976.1,576.7 L976.2,586.1 L976.2,595.6 L976.2,605 L976,614.4 L975.7,623.8 L975.3,633.2 L974.8,642.6 L974.2,652 L973.5,661.4 L972.8,670.8 M978.9,522 L979.5,531.4 L980,540.9 L980.4,550.3 L980.7,559.7 L980.8,569.2 L980.9,578.6 L980.8,588 L980.6,597.3 L980.3,606.7 L979.9,616.1 L979.4,625.5 L978.8,634.8 L978,644.1 L977.2,653.5 L976.2,662.8 L975.1,672.1 M984.5,524 L985,533.4 L985.4,542.9 L985.6,552.3 L985.8,561.7 L985.8,571 L985.6,580.4 L985.4,589.8 L985,599.1 L984.5,608.5 L983.9,617.8 L983.1,627.1 L982.2,636.4 L981.2,645.7 L980.1,655 L978.9,664.2 L977.5,673.5 M990.1,526 L990.5,535.4 L990.8,544.8 L990.9,554.2 L990.8,563.6 L990.7,572.9 L990.4,582.3 L989.9,591.6 L989.4,600.9 L988.7,610.2 L987.8,619.5 L986.8,628.8 L985.7,638 L984.5,647.2 L983.1,656.5 L981.5,665.7 L979.9,674.9 M995.8,528 L996,537.4 L996.1,546.8 L996.1,556.1 L995.9,565.5 L995.6,574.8 L995.1,584.1 L994.5,593.4 L993.8,602.7 L992.8,611.9 L991.8,621.2 L990.6,630.4 L989.2,639.6 L987.7,648.8 L986,658 L984.2,667.1 L982.2,676.2 M1001.4,530 L1001.5,539.4 L1001.5,548.7 L1001.4,558.1 L1001,567.4 L1000.5,576.7 L999.9,586 L999.1,595.2 L998.1,604.5 L997,613.7 L995.7,622.9 L994.3,632.1 L992.7,641.2 L990.9,650.3 L989,659.5 L986.9,668.6 L984.6,677.6 M1007,532 L1007,541.4 L1006.9,550.7 L1006.6,560 L1006.1,569.3 L1005.5,578.6 L1004.7,587.8 L1003.7,597.1 L1002.5,606.2 L1001.2,615.4 L999.7,624.6 L998,633.7 L996.1,642.8 L994.1,651.9 L991.9,661 L989.5,670 L987,679 M1012.6,534 L1012.5,543.3 L1012.3,552.7 L1011.8,562 L1011.2,571.2 L1010.4,580.5 L1009.4,589.7 L1008.2,598.9 L1006.9,608 L1005.3,617.2 L1003.6,626.3 L1001.7,635.4 L999.6,644.4 L997.3,653.4 L994.9,662.4 L992.2,671.4 L989.4,680.4 M1018.2,536 L1018.1,545.3 L1017.7,554.6 L1017.1,563.9 L1016.3,573.1 L1015.3,582.4 L1014.2,591.5 L1012.8,600.7 L1011.2,609.8 L1009.5,618.9 L1007.5,628 L1005.4,637 L1003.1,646 L1000.5,655 L997.8,663.9 L994.9,672.9 L991.8,681.8 M1023.9,538 L1023.6,547.3 L1023.1,556.6 L1022.3,565.8 L1021.4,575.1 L1020.3,584.2 L1018.9,593.4 L1017.4,602.5 L1015.6,611.6 L1013.7,620.6 L1011.5,629.7 L1009.1,638.7 L1006.5,647.6 L1003.7,656.5 L1000.7,665.4 L997.5,674.3 L994.1,683.1 M1029.5,540 L1029.1,549.3 L1028.4,558.6 L1027.6,567.8 L1026.5,577 L1025.2,586.1 L1023.7,595.2 L1022,604.3 L1020,613.4 L1017.8,622.4 L1015.4,631.4 L1012.8,640.3 L1010,649.2 L1007,658.1 L1003.7,666.9 L1000.2,675.7 L996.5,684.5 M1035.1,542 L1034.6,551.3 L1033.8,560.5 L1032.8,569.7 L1031.6,578.9 L1030.1,588 L1028.4,597.1 L1026.5,606.1 L1024.4,615.2 L1022,624.1 L1019.4,633.1 L1016.5,642 L1013.5,650.8 L1010.2,659.6 L1006.6,668.4 L1002.9,677.2 L998.9,685.9 M1040.8,544 L1040.1,553.3 L1039.2,562.5 L1038.1,571.7 L1036.7,580.8 L1035.1,589.9 L1033.2,598.9 L1031.1,608 L1028.8,616.9 L1026.2,625.9 L1023.3,634.8 L1020.3,643.6 L1016.9,652.4 L1013.4,661.2 L1009.6,669.9 L1005.5,678.6 L1001.2,687.2 M1046.4,546 L1045.6,555.2 L1044.6,564.4 L1043.3,573.6 L1041.8,582.7 L1040,591.8 L1038,600.8 L1035.7,609.8 L1033.1,618.7 L1030.3,627.6 L1027.3,636.5 L1024,645.3 L1020.4,654 L1016.6,662.7 L1012.5,671.4 L1008.2,680 L1003.6,688.6 M1052,548 L1051.1,557.2 L1050,566.4 L1048.6,575.5 L1046.9,584.6 L1044.9,593.7 L1042.7,602.7 L1040.2,611.6 L1037.5,620.5 L1034.5,629.4 L1031.2,638.2 L1027.7,646.9 L1023.9,655.6 L1019.8,664.3 L1015.5,672.9 L1010.9,681.5 L1006,690" fill="none" stroke="#303034" stroke-width="0.95"/></g>
<path d="M974.7,546.9 Q1003,530 1042.2,528.1 Q1049,536 1046.3,544.4 Q1047,560 1045.5,562.3 Q1043,575 1038.2,581.9 Q1032,594 1025.1,604.7 Q1017,616 1008.9,625.9 Q1000,635 992.6,642.1 L977.9,652.7 Q993,628 992.6,625.9 Q994,600 991.8,596.5 Q989,580 986,573.7 Q980,555 974.7,546.9 Z" fill="none" stroke="#303034" stroke-width="1.7" stroke-linejoin="round"/>
<g clip-path="url(#mc4)"><path d="M777.5,665.9 L788.6,662.6 L799.7,659.6 L810.7,656.8 L821.6,654.3 L832.5,652.1 L843.2,650.1 L853.9,648.4 L864.5,647 L875,645.8 L885.5,644.9 L895.8,644.3 L906.1,643.9 L916.3,643.8 L926.4,644 L936.5,644.4 L946.5,645.1 M779.8,668.4 L790.6,666.4 L801.4,664.4 L812.1,662.6 L822.7,660.9 L833.2,659.3 L843.7,657.7 L854.2,656.3 L864.5,655 L874.8,653.8 L885,652.7 L895.1,651.7 L905.2,650.8 L915.2,650 L925.2,649.3 L935,648.7 L944.8,648.2 M782.4,670.8 L792.9,670 L803.3,669.1 L813.6,668.3 L823.9,667.3 L834.2,666.3 L844.3,665.2 L854.4,664.1 L864.5,662.9 L874.5,661.7 L884.4,660.4 L894.3,659 L904.2,657.6 L913.9,656.1 L923.6,654.6 L933.3,653 L942.9,651.3 M785.3,673 L795.4,673.4 L805.4,673.7 L815.4,673.8 L825.3,673.6 L835.2,673.2 L845,672.6 L854.8,671.7 L864.5,670.7 L874.2,669.4 L883.8,667.9 L893.4,666.2 L902.9,664.3 L912.4,662.2 L921.9,659.8 L931.3,657.2 L940.6,654.4 M788.6,675 L798.2,676.7 L807.8,678.1 L817.3,679.1 L826.8,679.7 L836.3,680 L845.7,679.8 L855.1,679.3 L864.5,678.4 L873.8,677.1 L883.1,675.5 L892.4,673.4 L901.6,671 L910.7,668.2 L919.9,665 L929,661.4 L938,657.5 M792.2,676.8 L801.3,679.8 L810.4,682.3 L819.5,684.3 L828.5,685.7 L837.6,686.6 L846.6,686.9 L855.5,686.7 L864.5,686 L873.4,684.7 L882.3,682.9 L891.2,680.5 L900,677.6 L908.9,674.2 L917.6,670.2 L926.4,665.6 L935.2,660.6 M796,678.5 L804.6,682.8 L813.2,686.4 L821.8,689.4 L830.4,691.6 L838.9,693.1 L847.5,694 L856,694.1 L864.5,693.5 L873,692.2 L881.5,690.2 L889.9,687.6 L898.4,684.2 L906.8,680.1 L915.2,675.3 L923.6,669.8 L932,663.6 M800.2,679.9 L808.3,685.6 L816.3,690.4 L824.4,694.3 L832.4,697.3 L840.4,699.5 L848.5,700.8 L856.5,701.3 L864.5,700.9 L872.5,699.6 L880.5,697.5 L888.5,694.5 L896.5,690.7 L904.5,685.9 L912.5,680.4 L920.5,673.9 L928.4,666.6 M804.7,681.2 L812.2,688.2 L819.6,694.1 L827.1,699 L834.6,702.9 L842,705.8 L849.5,707.6 L857,708.4 L864.5,708.2 L872,707 L879.5,704.7 L887,701.4 L894.5,697.1 L902,691.8 L909.6,685.4 L917.1,678 L924.6,669.6 M809.5,682.4 L816.3,690.6 L823.2,697.7 L830,703.6 L836.9,708.4 L843.8,711.9 L850.7,714.3 L857.6,715.4 L864.5,715.4 L871.4,714.2 L878.4,711.8 L885.4,708.2 L892.4,703.5 L899.4,697.5 L906.4,690.4 L913.4,682.1 L920.5,672.6 M814.6,683.3 L820.8,692.9 L827,701.2 L833.1,708.1 L839.4,713.7 L845.6,717.9 L851.9,720.8 L858.2,722.3 L864.5,722.5 L870.9,721.3 L877.2,718.8 L883.6,715 L890.1,709.8 L896.5,703.2 L903,695.3 L909.5,686.1 L916,675.5 M795.9,652.6 L797,656.7 L798.2,660.6 L799.6,664.4 L801.2,668.2 L802.9,671.8 L804.8,675.3 L806.8,678.7 L809,682 L811.4,685.2 L813.9,688.3 L816.5,691.3 L819.4,694.2 L822.4,696.9 L825.5,699.6 L828.8,702.2 L832.3,704.6 M805.9,648.9 L806.8,653.6 L807.9,658.2 L809,662.7 L810.4,667.2 L811.8,671.5 L813.4,675.7 L815.1,679.8 L817,683.8 L819,687.7 L821.1,691.6 L823.4,695.3 L825.8,698.9 L828.3,702.4 L831,705.8 L833.8,709.1 L836.8,712.4 M815.8,645.6 L816.6,650.9 L817.4,656.1 L818.4,661.2 L819.5,666.2 L820.7,671.1 L822,675.9 L823.4,680.6 L825,685.2 L826.6,689.8 L828.4,694.2 L830.2,698.5 L832.2,702.8 L834.3,707 L836.5,711 L838.9,715 L841.3,718.9 M825.7,642.6 L826.3,648.4 L827,654.1 L827.7,659.7 L828.6,665.1 L829.5,670.5 L830.6,675.9 L831.7,681.1 L832.9,686.2 L834.2,691.3 L835.6,696.2 L837.1,701.1 L838.7,705.9 L840.3,710.6 L842.1,715.2 L843.9,719.7 L845.9,724.1 M835.5,640.1 L836,646.2 L836.4,652.3 L837,658.2 L837.6,664.1 L838.3,669.9 L839.1,675.6 L839.9,681.2 L840.8,686.8 L841.8,692.3 L842.8,697.6 L843.9,702.9 L845.1,708.2 L846.4,713.3 L847.7,718.3 L849,723.3 L850.5,728.2 M845.3,637.9 L845.5,644.3 L845.9,650.7 L846.2,656.9 L846.6,663.1 L847.1,669.2 L847.6,675.2 L848.2,681.1 L848.7,686.9 L849.4,692.7 L850.1,698.4 L850.8,704 L851.6,709.6 L852.4,715.1 L853.3,720.5 L854.2,725.8 L855.1,731 M854.9,636.2 L855.1,642.7 L855.2,649.2 L855.4,655.7 L855.6,662 L855.8,668.3 L856.1,674.5 L856.3,680.6 L856.6,686.7 L856.9,692.7 L857.3,698.6 L857.6,704.4 L858,710.2 L858.4,715.9 L858.9,721.5 L859.3,727.1 L859.8,732.6 M864.5,634.8 L864.5,641.4 L864.5,648 L864.5,654.5 L864.5,660.9 L864.5,667.3 L864.5,673.6 L864.5,679.8 L864.5,686 L864.5,692.1 L864.5,698.1 L864.5,704.1 L864.5,710 L864.5,715.8 L864.5,721.6 L864.5,727.3 L864.5,733 M874,633.8 L873.9,640.4 L873.7,647 L873.6,653.4 L873.4,659.8 L873.1,666.2 L872.9,672.5 L872.6,678.7 L872.3,684.9 L872,691 L871.7,697.1 L871.3,703.1 L871,709 L870.6,714.9 L870.1,720.7 L869.7,726.4 L869.2,732.1 M883.4,633.2 L883.2,639.7 L882.9,646.1 L882.6,652.5 L882.2,658.7 L881.7,665 L881.3,671.2 L880.7,677.3 L880.2,683.4 L879.6,689.4 L878.9,695.4 L878.2,701.3 L877.5,707.1 L876.7,712.9 L875.8,718.7 L874.9,724.4 L874,730 M892.8,633 L892.4,639.3 L892,645.4 L891.5,651.6 L890.9,657.6 L890.3,663.7 L889.6,669.6 L888.8,675.6 L888,681.4 L887.1,687.3 L886.1,693 L885,698.8 L883.9,704.5 L882.8,710.1 L881.5,715.7 L880.2,721.2 L878.8,726.7 M902.1,633.2 L901.6,639.1 L901.1,645 L900.4,650.8 L899.7,656.5 L898.8,662.2 L897.9,667.9 L896.9,673.5 L895.8,679.1 L894.6,684.6 L893.3,690.1 L891.9,695.6 L890.4,701 L888.9,706.3 L887.2,711.6 L885.5,716.9 L883.6,722.2 M911.3,633.8 L910.7,639.3 L910,644.7 L909.2,650 L908.3,655.4 L907.3,660.7 L906.2,665.9 L904.9,671.1 L903.5,676.3 L902,681.4 L900.5,686.6 L898.7,691.6 L896.9,696.6 L895,701.6 L892.9,706.6 L890.8,711.5 L888.5,716.4 M920.5,634.8 L919.8,639.7 L919,644.6 L918,649.4 L917,654.2 L915.7,659 L914.4,663.7 L912.9,668.4 L911.3,673.1 L909.5,677.8 L907.6,682.4 L905.6,687 L903.4,691.5 L901.1,696 L898.7,700.5 L896.1,705 L893.4,709.4 M929.5,636.2 L928.8,640.4 L927.8,644.6 L926.8,648.9 L925.5,653 L924.1,657.2 L922.6,661.3 L920.9,665.4 L919,669.5 L917,673.5 L914.8,677.6 L912.4,681.6 L909.9,685.5 L907.3,689.5 L904.4,693.4 L901.5,697.3 L898.3,701.2" fill="none" stroke="#303034" stroke-width="0.95"/></g>
<path d="M803.1,664.8 L884.5,629.3 Q895,647.4 924.1,649.1 Q928,679.4 864.8,714.2 Q814,699.3 803.1,664.8 Z" fill="none" stroke="#303034" stroke-width="1.7" stroke-linejoin="round"/>
<path d="M1009.3,641 L1021.3,637.8 L1028,659.7 Q1000,695 950.4,723.9 L942.4,720 Q965,700 977.2,681 L993.2,651.7 L1003.9,649 Z" fill="#c6430e"/>
<path d="M942.4,720 Q965,700 977.2,681 L993.2,651.7 L998,652 Q985,690 950.4,723.9 Z" fill="#b63b0b"/>
<path d="M1003.9,649 L1009.3,641 L1012,650 Z" fill="#b63b0b"/>
<path d="M794,418.4 C801.6,418.5 807.9,420.2 814.9,423.2 C821.9,426.2 829.5,431.7 835.8,436.5 C842.1,441.3 847.4,446 852.5,451.8 C857.6,457.6 862.3,464.4 866.5,471.4 C870.7,478.4 874.6,486.3 877.6,493.7 C880.6,501.1 882.7,507.4 884.6,516 C886.5,524.5 888.1,536.4 889,545 C889.9,553.6 890.7,560.6 890.2,567.4 C889.7,574.2 888.1,580.5 886,585.6 C883.9,590.7 882.3,594.5 877.6,598 C872.9,601.5 867.3,603.5 858,606.5 C848.7,609.5 832.5,613.7 821.8,616.2 C811.1,618.8 802.8,621.6 794,621.8 C785.2,622 777.9,622.5 769,617.5 C760.1,612.5 748.6,602.5 740.8,592 C733,581.5 726.7,568.2 722,554.7 C717.3,541.2 713.9,522.8 712.6,510.7 C711.3,498.6 711.9,491.3 714,482.4 C716.1,473.4 719.5,464.8 725,457 C730.5,449.2 739.7,441.1 747,435.4 C754.3,429.7 761.2,425.6 769,422.8 C776.8,420 786.4,418.3 794,418.4 Z" fill="#000"/>
<polygon points="732.5,584 743,579 745.5,586 735,591" fill="#c9440f"/>
<path d="M744,463 C742.8,466.7 748.2,481.8 751,490 C753.8,498.2 757.8,505.2 761,512 C764.2,518.8 767.2,525.5 770,531 C772.8,536.5 774.7,539.3 778,545 C781.3,550.7 785.8,558.5 790,565 C794.2,571.5 798.9,578 803,584 C807.1,590 812.1,598.2 814.4,601 C816.7,603.8 816.2,604.3 817,601 C817.8,597.7 819,588.7 818.9,581.2 C818.8,573.7 817.9,563.5 816.2,556 C814.6,548.5 812.3,543.2 809,536 C805.7,528.8 801.1,520.8 796.3,512.7 C791.5,504.6 786.3,495 780,487.5 C773.7,480 764.4,471.7 758.4,467.6 C752.4,463.5 745.2,459.3 744,463 Z" fill="#231f1f"/>
<g clip-path="url(#gclip)">
<path d="M780,545 L790,547.5 L800,571 L794,573.5 Z" fill="#c9440f"/>
<path d="M806,541 L815,544 L820,566 L819,592 L810,582 L807.5,563 Z" fill="#c9440f"/>
<path d="M808.5,557 L819,562 L820,571 L810.5,567 Z" fill="#6a5db0"/>
<path d="M748,468 Q772,505 786,540 Q800,575 812,604" fill="none" stroke="#000" stroke-width="3"/>
<path d="M744,485 Q766,520 776,545 Q790,575 798,590" fill="none" stroke="#000" stroke-width="2.6"/>
<path d="M754,492 Q768,489 782,482" fill="none" stroke="#000" stroke-width="2.6"/>
<path d="M764,512 Q782,507 797,499" fill="none" stroke="#000" stroke-width="2.6"/>
<path d="M773,532 Q792,530 808,522" fill="none" stroke="#000" stroke-width="2.6"/>
<path d="M781,548 Q800,551 816,545" fill="none" stroke="#000" stroke-width="2.6"/>
<path d="M790,564 Q806,570 822,566" fill="none" stroke="#000" stroke-width="2.6"/>
<path d="M798,580 Q810,586 822,585" fill="none" stroke="#000" stroke-width="2.4"/>
<path d="M750,470 L760,466" fill="none" stroke="#000" stroke-width="2.4"/>
<path d="M805,600 L822,596" fill="none" stroke="#000" stroke-width="2.2"/>
</g>
<polygon points="763,514 766,518 763.5,519" fill="#c9440f"/><polygon points="768,521 771,524 768.5,525" fill="#c9440f"/>
<ellipse cx="771" cy="537" rx="1.5" ry="3" fill="#c8ccd8" transform="rotate(-20 771 537)"/>
<defs><linearGradient id="gz" x1="0" x2="1"><stop offset="0" stop-color="#b0a800"/><stop offset="0.4" stop-color="#eee830"/><stop offset="1" stop-color="#a09800"/></linearGradient><linearGradient id="gx" x1="0" y1="0" x2="0" y2="1"><stop offset="0" stop-color="#e01818"/><stop offset="1" stop-color="#a00000"/></linearGradient><linearGradient id="gy" x1="0" y1="0" x2="0" y2="1"><stop offset="0" stop-color="#18dc18"/><stop offset="1" stop-color="#00a800"/></linearGradient></defs>
<line x1="447.5" y1="786" x2="407" y2="803" stroke="#c40000" stroke-width="8"/>
<ellipse cx="406.5" cy="802.5" rx="5.8" ry="7.8" fill="#d00808" transform="rotate(-20 406.5 802.5)"/>
<line x1="447" y1="786" x2="482" y2="801" stroke="#00c000" stroke-width="8"/>
<ellipse cx="482.8" cy="801.5" rx="6" ry="7.8" fill="#12d612" transform="rotate(20 482.8 801.5)"/>
<polygon points="440.5,741 452.6,741 452.8,782 446,784" fill="url(#gz)"/>
<path d="M436,737.5 Q441,733 445,729.5 Q449,733 454,737.5 Q452,741.5 445,741.5 Q438,741.5 436,737.5 Z" fill="#dcd418"/>
<path d="M446,717 H453 L446,729.3 H453.5" fill="none" stroke="#e6e600" stroke-width="1.3"/>
<path d="M491.5,794 L494.6,799.5 L497.8,794 M494.6,799.5 V806" fill="none" stroke="#00dc00" stroke-width="1.3"/>
<path d="M401.5,795 L407,806.5 M407,795 L401.5,806.5" fill="none" stroke="#ff1a1a" stroke-width="1.3"/>
</svg>
</body></html>
